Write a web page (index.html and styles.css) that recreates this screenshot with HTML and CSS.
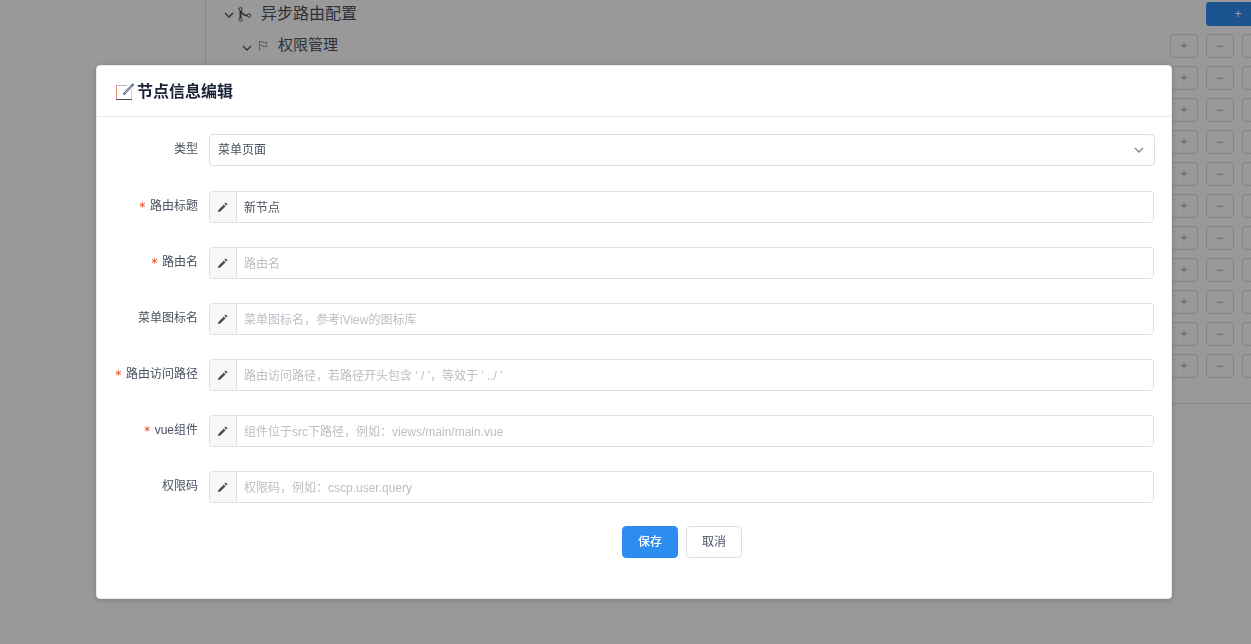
FILE: index.html
```html
<!DOCTYPE html>
<html lang="zh-CN">
<head>
<meta charset="utf-8">
<title>节点信息编辑</title>
<link rel="stylesheet" href="styles.css">
</head>
<body>
<svg class="sprite" aria-hidden="true">
  <symbol id="chevron" viewBox="0 0 10 10"><path d="M1 3l4 4 4-4" fill="none" stroke="currentColor" stroke-width="1.3"/></symbol>
  <symbol id="pen" viewBox="0 0 12 12"><path d="M1 11l.5-2.300 5.300-5.300 1.900 1.900-5.300 5.300zM7.500 2.700l.9-.9q.4-.4.8 0l1.100 1.100q.4.400 0 .8l-.9.9z" fill="currentColor"/></symbol>
</svg>
<main class="page">
  <aside class="side"></aside>
  <section class="tree">
    <div class="row root">
      <svg class="arrow"><use href="#chevron"/></svg>
      <svg class="branch" viewBox="0 0 14 16" fill="none" stroke="currentColor"><circle cx="2.500" cy="3" r="1.500"/><circle cx="2.500" cy="13.500" r="1.500"/><circle cx="11" cy="9.500" r="1.700"/><path d="M2.500 4.500v7.500" stroke-width="2"/><path d="M3 5c1 3 3 4.500 6.300 4.500" stroke-width="1.800"/></svg>
      <span class="name">异步路由配置</span>
      <span class="actions"><button class="mini add" type="button">+</button></span>
    </div>
    <div class="row child">
      <svg class="arrow"><use href="#chevron"/></svg>
      <svg class="flag" viewBox="0 0 10 12" fill="none" stroke="currentColor"><path d="M1.500 1v10M2 1.500h3v1h4l-1 2 1 2H5v-1H2"/></svg>
      <span class="name">权限管理</span>
      <span class="actions"><button class="mini" type="button">+</button><button class="mini" type="button">−</button><button class="mini" type="button"></button></span>
    </div>
    <div class="row"><span class="actions"><button class="mini" type="button">+</button><button class="mini" type="button">−</button><button class="mini" type="button"></button></span></div>
    <div class="row"><span class="actions"><button class="mini" type="button">+</button><button class="mini" type="button">−</button><button class="mini" type="button"></button></span></div>
    <div class="row"><span class="actions"><button class="mini" type="button">+</button><button class="mini" type="button">−</button><button class="mini" type="button"></button></span></div>
    <div class="row"><span class="actions"><button class="mini" type="button">+</button><button class="mini" type="button">−</button><button class="mini" type="button"></button></span></div>
    <div class="row"><span class="actions"><button class="mini" type="button">+</button><button class="mini" type="button">−</button><button class="mini" type="button"></button></span></div>
    <div class="row"><span class="actions"><button class="mini" type="button">+</button><button class="mini" type="button">−</button><button class="mini" type="button"></button></span></div>
    <div class="row"><span class="actions"><button class="mini" type="button">+</button><button class="mini" type="button">−</button><button class="mini" type="button"></button></span></div>
    <div class="row"><span class="actions"><button class="mini" type="button">+</button><button class="mini" type="button">−</button><button class="mini" type="button"></button></span></div>
    <div class="row"><span class="actions"><button class="mini" type="button">+</button><button class="mini" type="button">−</button><button class="mini" type="button"></button></span></div>
    <div class="row"><span class="actions"><button class="mini" type="button">+</button><button class="mini" type="button">−</button><button class="mini" type="button"></button></span></div>
  </section>
</main>
<div class="mask">
  <div class="dialog" role="dialog" aria-modal="true" aria-labelledby="title">
    <header class="head">
      <svg class="edit" viewBox="0 0 20 20" fill="none">
        <path d="M12 3.500H2" stroke="#b4b8c6"/><path d="M1.500 3v15" stroke="#e0977c"/><path d="M16.500 8v9" stroke="#e6cf9a"/><path d="M1 17.500h16" stroke="#464c5b"/>
        <path d="M8.500 12.500L18.500 2" stroke="#59607a" stroke-width="2.400"/><path d="M9.500 11.500L17 3.600" stroke="#d5dbea" stroke-width=".9"/>
      </svg>
      <h1 class="title" id="title">节点信息编辑</h1>
    </header>
    <form class="form">
      <div class="field">
        <label class="label" for="type">类型</label>
        <div class="picker"><select class="select" id="type"><option>菜单页面</option></select><svg class="caret"><use href="#chevron"/></svg></div>
      </div>
      <div class="field">
        <label class="label" for="f1"><span class="star">*</span>路由标题</label>
        <div class="group"><span class="addon"><svg class="pen"><use href="#pen"/></svg></span><input class="input" id="f1" type="text" value="新节点"></div>
      </div>
      <div class="field">
        <label class="label" for="f2"><span class="star">*</span>路由名</label>
        <div class="group"><span class="addon"><svg class="pen"><use href="#pen"/></svg></span><input class="input" id="f2" type="text" placeholder="路由名"></div>
      </div>
      <div class="field">
        <label class="label" for="f3">菜单图标名</label>
        <div class="group"><span class="addon"><svg class="pen"><use href="#pen"/></svg></span><input class="input" id="f3" type="text" placeholder="菜单图标名，参考iView的图标库"></div>
      </div>
      <div class="field">
        <label class="label" for="f4"><span class="star">*</span>路由访问路径</label>
        <div class="group"><span class="addon"><svg class="pen"><use href="#pen"/></svg></span><input class="input" id="f4" type="text" placeholder="路由访问路径，若路径开头包含 ' / '，等效于 ' ../ '"></div>
      </div>
      <div class="field">
        <label class="label" for="f5"><span class="star">*</span>vue组件</label>
        <div class="group"><span class="addon"><svg class="pen"><use href="#pen"/></svg></span><input class="input" id="f5" type="text" placeholder="组件位于src下路径，例如：views/main/main.vue"></div>
      </div>
      <div class="field">
        <label class="label" for="f6">权限码</label>
        <div class="group"><span class="addon"><svg class="pen"><use href="#pen"/></svg></span><input class="input" id="f6" type="text" placeholder="权限码，例如：cscp.user.query"></div>
      </div>
      <div class="buttons">
        <button class="btn primary" type="button">保存</button>
        <button class="btn" type="button">取消</button>
      </div>
    </form>
  </div>
</div>
</body>
</html>
```
FILE: styles.css
```css
* { box-sizing: border-box; }
body {
  margin: 0;
  overflow: hidden;
  background: #fff;
  color: #495060;
  font: 12px/18px "Liberation Sans", "Noto Sans CJK SC", sans-serif;
}
button, input, select { font: inherit; color: inherit; }
.sprite { position: absolute; width: 0; height: 0; }

.page { display: flex; min-height: 100vh; align-items: flex-start; }
.side { flex: 0 0 205px; }
.tree {
  flex: 1;
  min-width: 0;
  overflow: hidden;
  padding: 0 0 21px 18px;
  border-left: 1px solid #dddee1;
  border-bottom: 1px solid #dddee1;
}
.row { display: flex; align-items: center; height: 32px; }
.root { height: 30px; padding-bottom: 3px; font-size: 16px; }
.child { padding-left: 18px; font-size: 15px; }
.child .name { padding-bottom: 2px; }
.arrow { width: 10px; height: 10px; margin-top: 3px; }
.branch { width: 14px; height: 16px; margin: 0 9px 0 4px; }
.flag { width: 10px; height: 12px; margin: 0 10px 0 6px; color: #9ea2ac; }
.actions { display: flex; flex: 0 0 81px; min-width: 0; gap: 8px; margin-left: auto; }
.root .actions { flex-basis: 45px; }
.mini {
  flex: 0 0 28px;
  height: 24px;
  padding: 0;
  border: 1px solid #dddee1;
  border-radius: 3px;
  background: #fff;
  color: #a0a4ad;
  font-size: 12px;
  line-height: 20px;
}
.mini.add { flex-basis: 64px; border-color: #2d8cf0; background: #2d8cf0; color: #fff; }

.mask {
  position: fixed;
  inset: 0;
  overflow: hidden;
  padding: 65px 79px 45px 96px;
  background: rgba(0, 0, 0, .4);
}
.dialog {
  border: 1px solid #e9eaec;
  border-radius: 4px;
  background: #fff;
  box-shadow: 0 1px 6px rgba(0, 0, 0, .2);
}
.head {
  display: flex;
  align-items: center;
  gap: 2px;
  height: 51px;
  padding: 2px 0 0 18px;
  border-bottom: 1px solid #e9eaec;
}
.edit { width: 20px; height: 20px; }
.title { margin: 0; color: #1c2438; font-size: 16px; line-height: 20px; font-weight: 700; }
.form { padding: 17px 16px 40px 0; }
.field { display: flex; margin-bottom: 24px; }
.field:first-child { margin-bottom: 25px; }
.label {
  display: flex;
  justify-content: flex-end;
  flex: 0 0 112px;
  height: 30px;
  padding-right: 11px;
  line-height: 30px;
}
.star { margin-right: 4px; color: #ed3f14; font-family: "DejaVu Sans Mono", monospace; line-height: 32px; }
.picker { display: grid; flex: 1; align-items: center; }
.picker > * { grid-area: 1 / 1; }
.select {
  width: 100%;
  height: 32px;
  padding: 0 24px 0 8px;
  border: 1px solid #dddee1;
  border-radius: 4px;
  background: #fff;
  appearance: none;
}
.caret { justify-self: end; width: 10px; height: 10px; margin-right: 11px; color: #80848f; pointer-events: none; }
.group {
  display: flex;
  flex: 1;
  height: 32px;
  margin-right: 1px;
  border: 1px solid #dddee1;
  border-radius: 4px;
  overflow: hidden;
}
.addon {
  display: flex;
  align-items: center;
  justify-content: center;
  flex: 0 0 27px;
  border-right: 1px solid #dddee1;
  background: #f8f8f9;
}
.pen { width: 12px; height: 12px; }
.input { flex: 1; min-width: 0; padding: 1px 7px 0; border: 0; outline: 0; background: #fff; }
.input::placeholder { color: #bbbec4; opacity: 1; }
.buttons { display: flex; justify-content: center; gap: 8px; margin: -1px 0 0 112px; }
.btn {
  height: 32px;
  padding: 0 15px;
  border: 1px solid #dddee1;
  border-radius: 4px;
  background: #fff;
}
.btn.primary { border-color: #2d8cf0; background: #2d8cf0; color: #fff; font-weight: 500; }
```
